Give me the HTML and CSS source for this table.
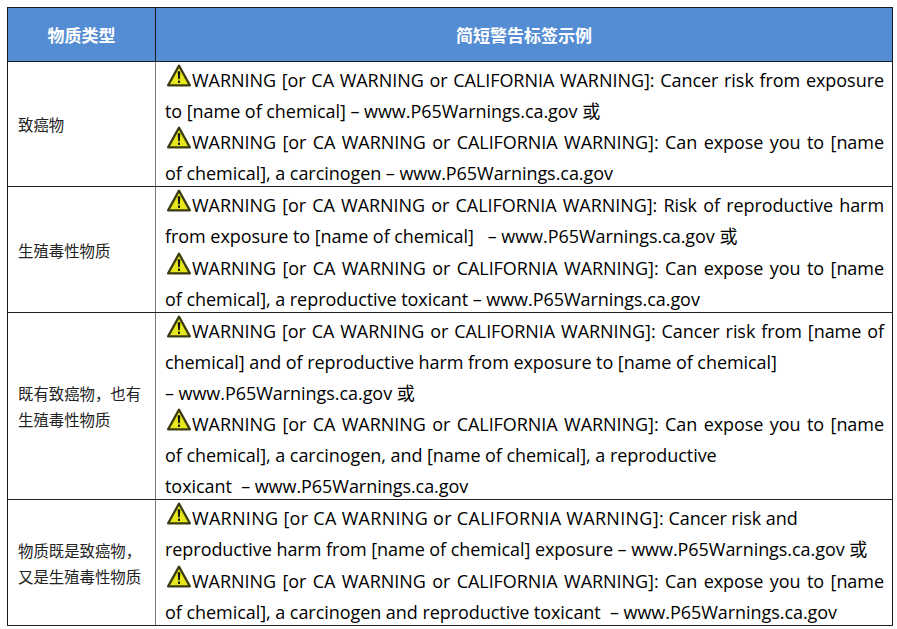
FILE: index.html
```html
<!DOCTYPE html>
<html lang="zh-CN">
<head>
<meta charset="utf-8">
<link rel="stylesheet" href="styles.css">
</head>
<body>
<svg width="0" height="0" class="defs">
  <defs>
    <symbol id="warn" viewBox="0 0 24 23">
      <path d="M12 1.6 L22.9 21.4 H1.1 Z" fill="#e6e61c" stroke="#3b3b12" stroke-width="2.2" stroke-linejoin="round"/>
      <path d="M10.7 7.2 H13.3 L12.8 15.2 H11.2 Z" fill="#111"/>
      <rect x="11" y="16.6" width="2" height="2.3" fill="#111"/>
    </symbol>
  </defs>
</svg>
<table class="p65">
  <colgroup><col class="c1"><col class="c2"></colgroup>
  <thead>
    <tr><th>物质类型</th><th>简短警告标签示例</th></tr>
  </thead>
  <tbody>
    <tr>
      <td class="kind">致癌物</td>
      <td class="ex">
        <div class="ln j"><svg class="ico"><use href="#warn"/></svg>WARNING [or CA WARNING or CALIFORNIA WARNING]: Cancer risk from exposure</div>
        <div class="ln">to [name of chemical] – www.P65Warnings.ca.gov 或</div>
        <div class="ln j"><svg class="ico"><use href="#warn"/></svg>WARNING [or CA WARNING or CALIFORNIA WARNING]: Can expose you to [name</div>
        <div class="ln">of chemical], a carcinogen – www.P65Warnings.ca.gov</div>
      </td>
    </tr>
    <tr>
      <td class="kind">生殖毒性物质</td>
      <td class="ex">
        <div class="ln j"><svg class="ico"><use href="#warn"/></svg>WARNING [or CA WARNING or CALIFORNIA WARNING]: Risk of reproductive harm</div>
        <div class="ln">from exposure to [name of chemical] &nbsp; – www.P65Warnings.ca.gov 或</div>
        <div class="ln j"><svg class="ico"><use href="#warn"/></svg>WARNING [or CA WARNING or CALIFORNIA WARNING]: Can expose you to [name</div>
        <div class="ln">of chemical], a reproductive toxicant – www.P65Warnings.ca.gov</div>
      </td>
    </tr>
    <tr>
      <td class="kind">既有致癌物，也有<br>生殖毒性物质</td>
      <td class="ex">
        <div class="ln j"><svg class="ico"><use href="#warn"/></svg>WARNING [or CA WARNING or CALIFORNIA WARNING]: Cancer risk from [name of</div>
        <div class="ln">chemical] and of reproductive harm from exposure to [name of chemical]</div>
        <div class="ln">– www.P65Warnings.ca.gov 或</div>
        <div class="ln j"><svg class="ico"><use href="#warn"/></svg>WARNING [or CA WARNING or CALIFORNIA WARNING]: Can expose you to [name</div>
        <div class="ln">of chemical], a carcinogen, and [name of chemical], a reproductive</div>
        <div class="ln">toxicant &nbsp;– www.P65Warnings.ca.gov</div>
      </td>
    </tr>
    <tr>
      <td class="kind">物质既是致癌物，<br>又是生殖毒性物质</td>
      <td class="ex">
        <div class="ln"><svg class="ico"><use href="#warn"/></svg><span class="caps">WARNING [or CA WARNING or CALIFORNIA WARNING]:</span> Cancer risk and</div>
        <div class="ln">reproductive harm from [name of chemical] exposure – www.P65Warnings.ca.gov 或</div>
        <div class="ln j"><svg class="ico"><use href="#warn"/></svg>WARNING [or CA WARNING or CALIFORNIA WARNING]: Can expose you to [name</div>
        <div class="ln">of chemical], a carcinogen and reproductive toxicant &nbsp;– www.P65Warnings.ca.gov</div>
      </td>
    </tr>
  </tbody>
</table>
</body>
</html>
```

FILE: styles.css
```css
html, body {
  margin: 0;
  padding: 0;
  background: #ffffff;
}
body {
  padding: 7px 0 0 7px;
  font-family: "Open Sans", "Noto Sans CJK SC", sans-serif;
  color: #000;
}
.defs {
  position: absolute;
  width: 0;
  height: 0;
}
.p65 {
  border-collapse: collapse;
  table-layout: fixed;
  width: 885px;
  border: 1px solid #1a1a1a;
}
.c1 { width: 148px; }
.c2 { width: 737px; }
.p65 th {
  background: #548dd4;
  color: #ffffff;
  height: 53px;
  padding: 0;
  font-family: "Noto Sans CJK SC", sans-serif;
  font-weight: 700;
  font-size: 17px;
  text-align: center;
  vertical-align: middle;
  border-bottom: 1px solid #1a1a1a;
  border-right: 1px solid #1a1a1a;
}
.p65 td {
  padding: 0;
  border-bottom: 1px solid #222;
}
.p65 td.kind {
  border-right: 1px solid #7a7a7a;
  padding-left: 10px;
  vertical-align: middle;
  font-family: "Noto Sans CJK SC", sans-serif;
  font-size: 15.4px;
  line-height: 26px;
  color: #222;
}
.p65 td.ex {
  padding: 0 8px 0 9px;
  vertical-align: top;
  font-size: 18px;
}
.ln {
  box-sizing: border-box;
  height: 31.1px;
  padding-top: 5px;
  line-height: 26.1px;
  white-space: nowrap;
  text-align: left;
  letter-spacing: -0.05px;
}
.ln.j {
  text-align: justify;
  text-align-last: justify;
}
.caps {
  letter-spacing: 0.3px;
}
.ico {
  width: 24px;
  height: 23px;
  vertical-align: baseline;
  margin: -5px 1px 0 2px;
}
```
